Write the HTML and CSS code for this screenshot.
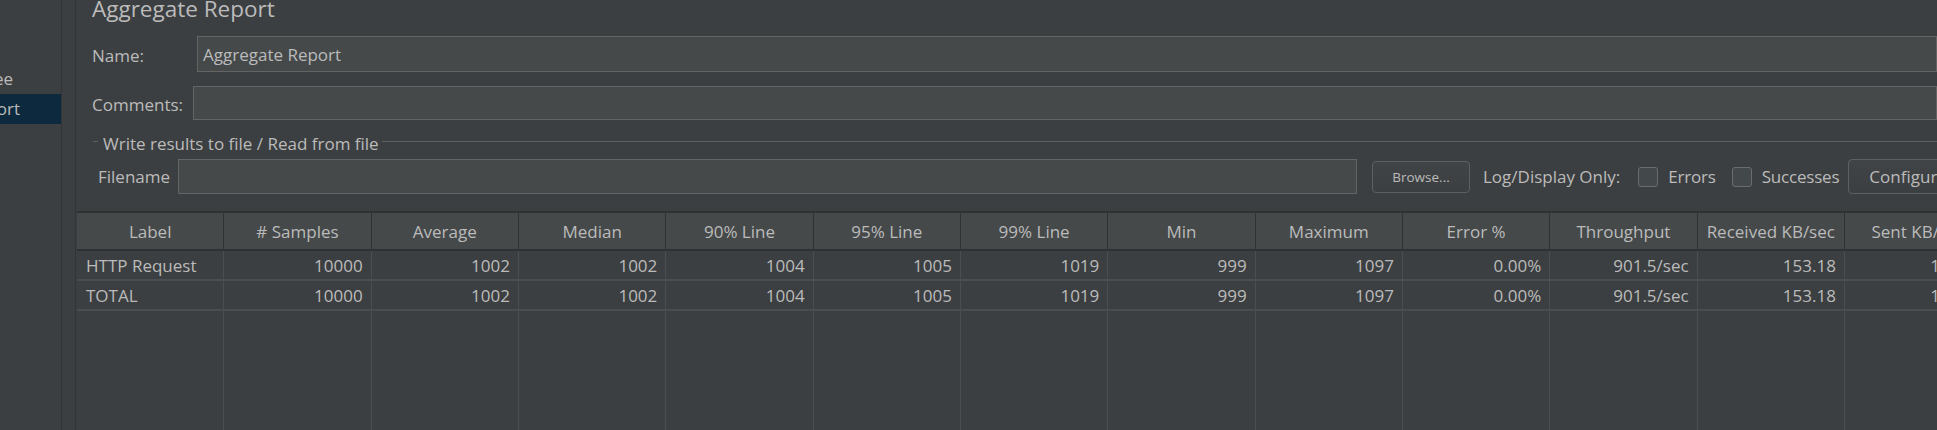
FILE: index.html
```html
<!DOCTYPE html>
<html lang="en">
<head>
<meta charset="utf-8">
<title>Aggregate Report</title>
<link rel="stylesheet" href="styles.css">
</head>
<body>
<div class="app">
  <aside class="tree">
    <div class="tree-item tree-item--results"><span>View Results Tree</span></div>
    <div class="tree-item tree-item--aggregate selected"><span>Aggregate Report</span></div>
  </aside>
  <div class="divider"></div>
  <main class="panel">
    <h1 class="title">Aggregate Report</h1>
    <div class="form-row name-row">
      <label class="form-label">Name:</label>
      <div class="field">Aggregate Report</div>
    </div>
    <div class="form-row comments-row">
      <label class="form-label">Comments:</label>
      <div class="field"></div>
    </div>
    <section class="group">
      <div class="group-title"><span>Write results to file / Read from file</span></div>
      <div class="file-row">
        <label class="file-label">Filename</label>
        <div class="field file-field"></div>
        <button class="btn btn-small">Browse...</button>
        <span class="log-label">Log/Display Only:</span>
        <span class="check"><span class="box"></span><span class="check-text">Errors</span></span>
        <span class="check check--second"><span class="box"></span><span class="check-text">Successes</span></span>
        <button class="btn btn-config">Configure</button>
      </div>
    </section>
    <div class="table-wrap">
      <table class="report">
        <colgroup>
          <col><col><col><col><col><col><col><col><col><col><col><col><col>
        </colgroup>
        <thead>
          <tr>
            <th>Label</th><th># Samples</th><th>Average</th><th>Median</th><th>90% Line</th><th>95% Line</th><th>99% Line</th><th>Min</th><th>Maximum</th><th>Error %</th><th>Throughput</th><th>Received KB/sec</th><th>Sent KB/sec</th>
          </tr>
        </thead>
        <tbody>
          <tr>
            <td class="lbl">HTTP Request</td><td>10000</td><td>1002</td><td>1002</td><td>1004</td><td>1005</td><td>1019</td><td>999</td><td>1097</td><td>0.00%</td><td>901.5/sec</td><td>153.18</td><td>105.62</td>
          </tr>
          <tr>
            <td class="lbl">TOTAL</td><td>10000</td><td>1002</td><td>1002</td><td>1004</td><td>1005</td><td>1019</td><td>999</td><td>1097</td><td>0.00%</td><td>901.5/sec</td><td>153.18</td><td>105.62</td>
          </tr>
          <tr class="filler">
            <td></td><td></td><td></td><td></td><td></td><td></td><td></td><td></td><td></td><td></td><td></td><td></td><td></td>
          </tr>
        </tbody>
      </table>
    </div>
  </main>
</div>
</body>
</html>
```
FILE: styles.css
```css
* { box-sizing: border-box; }
html, body {
  margin: 0;
  padding: 0;
  width: 1937px;
  height: 430px;
  overflow: hidden;
  background: #3c3f41;
}
body {
  font-family: "Open Sans", "Noto Sans", sans-serif;
  font-size: 17px;
  color: #bbbbbb;
}
.app {
  display: flex;
  height: 430px;
}
.tree {
  width: 62px;
  flex: none;
  border-right: 1px solid #323436;
  padding-top: 64px;
  overflow: hidden;
}
.tree-item {
  height: 30px;
  line-height: 30px;
  display: flex;
  justify-content: flex-end;
  white-space: nowrap;
}
.tree-item span { flex: none; }
.tree-item--results { width: 13px; }
.tree-item--aggregate { width: 20px; }
.tree-item.selected {
  width: 61px;
  background: #0d293e;
  padding-right: 41px;
}
.divider {
  width: 14px;
  flex: none;
  border-right: 1px solid #323436;
}
.panel {
  flex: 1;
  min-width: 0;
  overflow: hidden;
}
.title {
  margin: 0 0 19px 16px;
  font-size: 22.5px;
  font-weight: normal;
  line-height: 17px;
  height: 17px;
  white-space: nowrap;
}
.form-row {
  display: flex;
  align-items: center;
  padding-left: 16px;
}
.name-row { height: 36px; }
.name-row .form-label { width: 105px; }
.comments-row { height: 34px; margin-top: 14px; }
.comments-row .form-label { width: 101px; }
.form-label { flex: none; padding-top: 3px; }
.field {
  flex: 1;
  align-self: stretch;
  background: #45494a;
  border: 1px solid #646464;
  padding: 0 5px;
  display: flex;
  align-items: center;
  white-space: nowrap;
}
.group {
  margin-top: 15px;
  padding-left: 17px;
}
.group-title {
  display: flex;
  align-items: center;
  height: 16px;
  white-space: nowrap;
}
.group-title::before {
  content: "";
  width: 5px;
  height: 1px;
  background: #5e6060;
  margin-top: -3px;
}
.group-title::after {
  content: "";
  flex: 1;
  height: 1px;
  background: #5e6060;
  margin-top: -3px;
}
.group-title span { padding: 0 3px 0 5px; }
.file-row {
  display: flex;
  align-items: center;
  height: 35px;
  margin-top: 8px;
  padding-left: 5px;
  white-space: nowrap;
}
.file-label { width: 80px; flex: none; }
.file-field { flex: none; width: 1179px; }
.btn {
  font-family: inherit;
  color: #bbbbbb;
  background: linear-gradient(#414446, #3c3f41);
  border: 1px solid #5e6060;
  border-radius: 4px;
  padding: 0;
  flex: none;
}
.btn-small {
  width: 98px;
  height: 32px;
  margin-left: 15px;
  font-size: 13.5px;
}
.log-label { margin-left: 13px; }
.check {
  display: inline-flex;
  align-items: center;
  margin-left: 18px;
}
.check--second { margin-left: 16px; }
.check-text { letter-spacing: -0.2px; }
.box {
  width: 20px;
  height: 20px;
  border: 1px solid #6b6b6b;
  border-radius: 3px;
  background: #43494a;
  margin-right: 10px;
}
.btn-config {
  height: 35px;
  width: 120px;
  margin-left: 9px;
  font-size: 17px;
  text-align: left;
  padding-left: 20px;
}
.table-wrap {
  margin-top: 17px;
  margin-left: 1px;
  border-top: 2px solid #2f3133;
}
.report {
  table-layout: fixed;
  width: 1915px;
  border-collapse: separate;
  border-spacing: 0;
}
.report col { width: 147.33px; }
.report th {
  height: 38px;
  background: #45494a;
  font-weight: normal;
  text-align: center;
  border-right: 1px solid #2f3133;
  border-bottom: 2px solid #2f3133;
  padding: 0;
  white-space: nowrap;
  overflow: hidden;
}
.report td {
  height: 30px;
  text-align: right;
  padding: 0 8px 0 0;
  border-right: 1px solid #4b4e50;
  border-bottom: 2px solid #4b4e50;
  white-space: nowrap;
  overflow: hidden;
}
.report td.lbl {
  text-align: left;
  padding-left: 9px;
}
.report .filler td {
  height: 130px;
  border-bottom: none;
}
```
